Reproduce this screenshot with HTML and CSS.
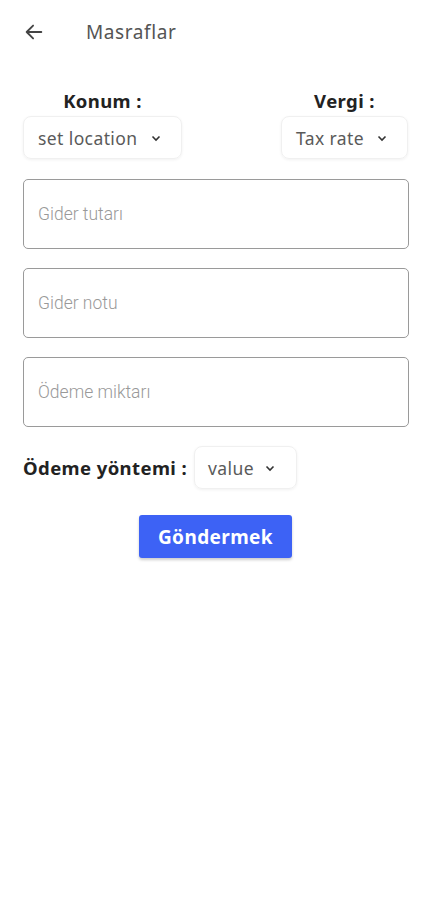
FILE: index.html
```html
<html>
    <head>
        <meta charset="utf-8">
        <link rel="stylesheet" href="styles.css">
    </head>
    <body>
        <div id="app">
            <div class="topbar">
                <svg class="back" width="22" height="22" viewBox="0 0 24 24">
                    <path d="M20 12H4M11 5l-7 7 7 7" fill="none" stroke="#444" stroke-width="2" stroke-linecap="round" stroke-linejoin="round"/>
                </svg>
                <span class="title">Masraflar</span>
            </div>

            <div class="pickers">
                <div class="picker">
                    <div class="label">Konum :</div>
                    <div class="select loc">set location
                        <svg class="chev" width="12" height="12" viewBox="0 0 12 12"><path d="M2.5 4.5l3.5 3.5 3.5-3.5" fill="none" stroke="#333" stroke-width="1.6"/></svg>
                    </div>
                </div>
                <div class="picker">
                    <div class="label">Vergi :</div>
                    <div class="select tax">Tax rate
                        <svg class="chev" width="12" height="12" viewBox="0 0 12 12"><path d="M2.5 4.5l3.5 3.5 3.5-3.5" fill="none" stroke="#333" stroke-width="1.6"/></svg>
                    </div>
                </div>
            </div>

            <div class="fields">
                <div class="field">Gider tutarı</div>
                <div class="field">Gider notu</div>
                <div class="field">Ödeme miktarı</div>
            </div>

            <div class="payrow">
                <span class="label">Ödeme yöntemi :</span>
                <div class="select pay">value
                    <svg class="chev" width="12" height="12" viewBox="0 0 12 12"><path d="M2.5 4.5l3.5 3.5 3.5-3.5" fill="none" stroke="#333" stroke-width="1.6"/></svg>
                </div>
            </div>

            <div class="actions">
                <button class="send">Göndermek</button>
            </div>
        </div>
    </body>
</html>
```

FILE: styles.css
```css
body{
    margin: 0;
    background: #fff;
    font-family: "Noto Sans", sans-serif;
}
#app{
    width: 431px;
    height: 900px;
}
.topbar{
    display: flex;
    align-items: center;
    height: 64px;
    padding-left: 23px;
}
.back{
    margin-right: 41px;
}
.title{
    font-size: 19px;
    letter-spacing: 0.6px;
    color: #555;
}
.pickers{
    display: flex;
    justify-content: space-between;
    padding: 25px 23px 0 23px;
}
.picker{
    display: flex;
    flex-direction: column;
    align-items: center;
}
.label{
    font-size: 18.5px;
    letter-spacing: 0.4px;
    font-weight: bold;
    color: #222;
    line-height: 24px;
}
.select{
    display: flex;
    align-items: center;
    justify-content: space-between;
    height: 43px;
    box-sizing: border-box;
    padding: 0 19px 0 14px;
    border-radius: 8px;
    border: 1px solid #f0f0f0;
    box-shadow: 0 1px 3px rgba(0,0,0,0.06);
    font-size: 17.5px;
    letter-spacing: 0.4px;
    color: #5a5a5a;
}
.picker .select{
    margin-top: 3px;
}
.select.loc{
    width: 159px;
}
.select.tax{
    width: 127px;
}
.select.pay{
    width: 103px;
    padding-left: 13px;
    padding-right: 20px;
}
.fields{
    padding: 20px 22px 0 23px;
    display: flex;
    flex-direction: column;
    gap: 19px;
}
.field{
    height: 70px;
    box-sizing: border-box;
    border: 1.5px solid #9a9a9a;
    border-radius: 5px;
    display: flex;
    align-items: center;
    padding-left: 14px;
    font-family: Roboto, sans-serif;
    font-weight: 300;
    font-size: 17.5px;
    color: #999;
}
.payrow{
    display: flex;
    align-items: center;
    gap: 7px;
    padding: 19px 23px 0 23px;
}
.actions{
    display: flex;
    justify-content: center;
    padding-top: 26px;
}
.send{
    width: 153px;
    height: 43px;
    border: none;
    border-radius: 3px;
    background: #3d62f5;
    color: #fff;
    font-family: "Noto Sans", sans-serif;
    font-size: 19px;
    letter-spacing: 0.4px;
    font-weight: bold;
    box-shadow: 0 2px 3px rgba(0,0,0,0.2);
}
```
